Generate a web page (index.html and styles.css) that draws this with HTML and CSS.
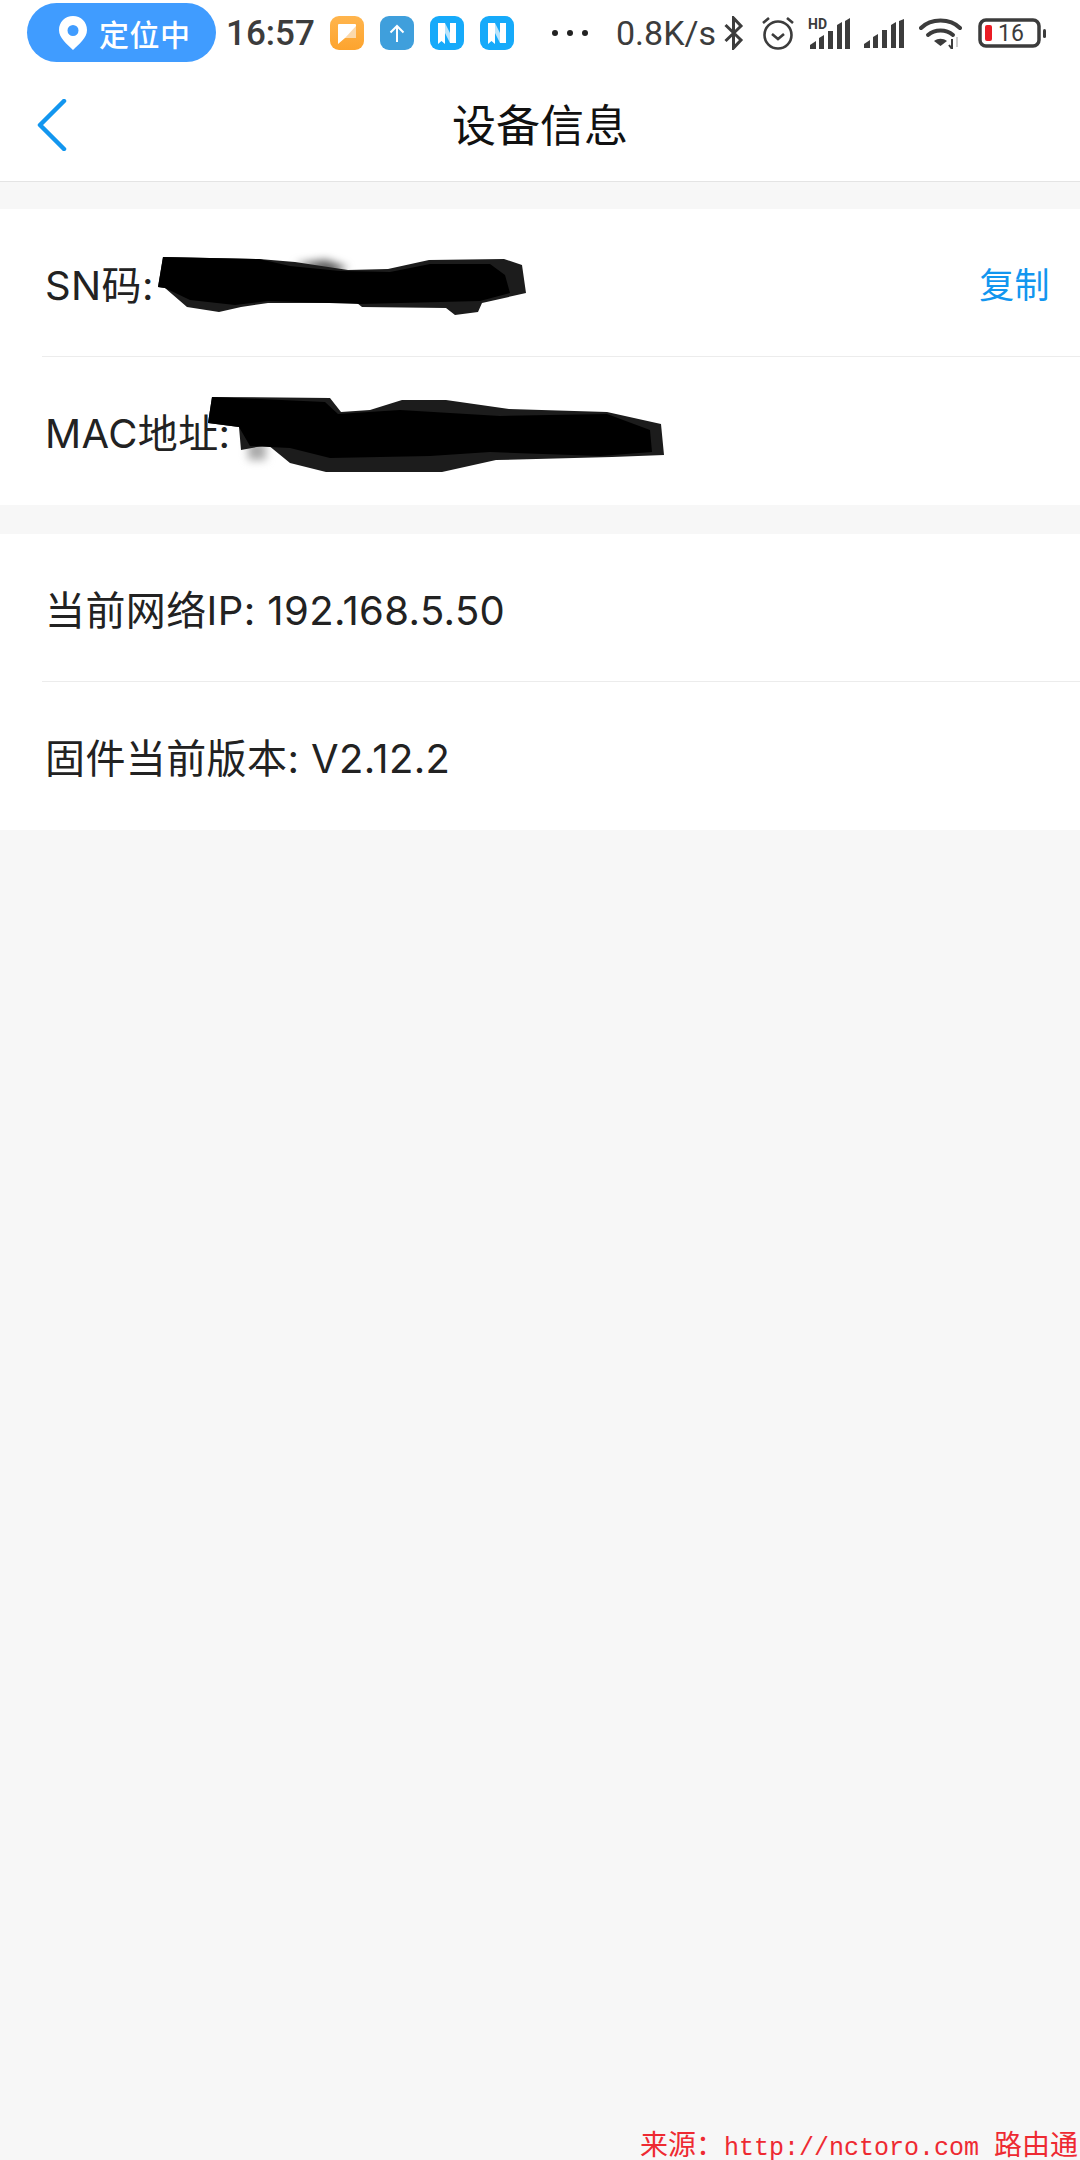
FILE: index.html
```html
<!DOCTYPE html>
<html lang="zh-CN">
<head>
	<meta charset="UTF-8">
	<title>设备信息</title>
	<link rel="stylesheet" href="styles.css">
</head>
<body>
	<div class="page">
		<div class="status">
			<div class="pill">
				<svg class="pin" viewBox="0 0 28 34"><path fill="#fff" fill-rule="evenodd" d="M14 0C6 0 0 6 0 14c0 8 8 14 14 20 6-6 14-12 14-20C28 6 22 0 14 0zm0 9a5.500 5.500 0 1 1 0 11 5.500 5.500 0 0 1 0-11z"/></svg>
				<span>定位中</span>
			</div>
			<span class="time">16:57</span>
			<div class="apps">
				<svg class="app" viewBox="0 0 34 34"><defs><linearGradient id="og" x1="0" y1="0" x2="0" y2="1"><stop offset="0" stop-color="#ffb54d"/><stop offset="1" stop-color="#fda42e"/></linearGradient></defs><rect width="34" height="34" rx="9" fill="url(#og)"/><path fill="#fff" d="M9 8h16a1 1 0 0 1 1 1v13H15l-7 6V9a1 1 0 0 1 1-1z"/><path fill="#fbd9ac" d="M26 10v12H15z"/></svg>
				<svg class="app" viewBox="0 0 34 34"><rect width="34" height="34" rx="9" fill="#3f9fdc"/><path fill="none" stroke="#fff" stroke-width="2" d="M17 26V10M10.500 16.500 17 10l6.500 6.500"/></svg>
				<svg class="app" viewBox="0 0 34 34"><rect width="34" height="34" rx="9" fill="#16aafa"/><path fill="#fff" d="M8 7h7v21l-3.500-3L8 28z"/><path fill="#fff" d="M20 7h6v20h-6z"/><path fill="#b9e4fb" d="M15 7l5 10v10l-5-10z"/></svg>
				<svg class="app" viewBox="0 0 34 34"><rect width="34" height="34" rx="9" fill="#16aafa"/><path fill="#fff" d="M8 7h7v21l-3.500-3L8 28z"/><path fill="#fff" d="M20 7h6v20h-6z"/><path fill="#b9e4fb" d="M15 7l5 10v10l-5-10z"/></svg>
			</div>
			<div class="dots"><i></i><i></i><i></i></div>
			<span class="speed">0.8K/s</span>
			<svg class="bt" viewBox="0 0 20 34"><path fill="none" stroke="#3c3c3c" stroke-width="3" d="M1.500 9 17 24 9.500 32V2L17 10 1.500 25"/></svg>
			<svg class="alarm" viewBox="0 0 34 34"><g fill="none" stroke="#3c3c3c" stroke-width="2.600"><circle cx="17" cy="19" r="13.500"/><path d="M11 18l6 5 6-5M2 7l6-5M32 7l-6-5"/></g></svg>
			<svg class="hd" viewBox="0 0 42 31"><text x="0" y="11" class="hd-text">HD</text><path fill="#3c3c3c" d="M2 31v-4l6-4v8zM11 31V20l5-3v14zM20 31V13h5v18zM29 31V7l5-3v27zM37 31V3l5-3v31z"/></svg>
			<svg class="signal" viewBox="0 0 40 29"><path fill="#3c3c3c" d="M0 29v-4l6-4v8zM9 29V18l5-3v14zM18 29V11h5v18zM27 29V6l5-3v26zM35 29V2l5-2v29z"/></svg>
			<svg class="wifi" viewBox="0 0 43 32"><g fill="none" stroke="#3c3c3c" stroke-width="4" stroke-linecap="round"><path d="M2 11C12 1 31 1 41 11"/><path d="M9 18c7-6 18-6 25 0"/></g><path fill="#3c3c3c" d="M15 24c4-3 9-3 13 0l-6.500 5z"/><path fill="none" stroke="#3c3c3c" stroke-width="2" d="M33 22v10M30 28l3 4"/><path fill="none" stroke="#ccc" stroke-width="2" d="M38 20v10"/></svg>
			<svg class="battery" viewBox="0 0 68 30"><rect x="2" y="2" width="59" height="26" rx="6" fill="none" stroke="#3c3c3c" stroke-width="3.500"/><rect x="7" y="7" width="7" height="16" rx="2" fill="#ea1c24"/><text x="20" y="23" class="batt-text">16</text><rect x="65" y="11" width="3" height="9" rx="1.500" fill="#3c3c3c"/></svg>
		</div>

		<div class="nav">
			<svg class="back" viewBox="0 0 30 52"><path fill="none" stroke="#1296ef" stroke-width="4.500" stroke-linecap="round" stroke-linejoin="round" d="M27 2 3 26l24 24"/></svg>
			<h1>设备信息</h1>
		</div>

		<div class="card">
			<div class="row">
				<span>SN码:</span>
				<a class="copy">复制</a>
				<svg class="scrawl" viewBox="0 209 1080 148"><path class="smudge" fill="#555" d="M295 264 326 260 348 268 330 275z"/><path fill="#1c1c1c" d="M163 257 259 259 295 262 348 270 388 269 429 260 504 259 522 265 526 293 482 303 478 312 455 315 446 308 362 307 357 303 268 303 241 307 219 312 187 307 165 288 158 287z"/><path d="M163 257 259 259 290 266 340 271 390 272 430 264 490 264 505 275 510 293 480 301 360 304 268 301 235 305 190 300 165 288 158 287z"/></svg>
			</div>
			<div class="row">
				<span>MAC地址:</span>
				<svg class="scrawl" viewBox="0 357 1080 148"><path class="smudge" fill="#aaa" d="M248 442H266V460H248z"/><path fill="#1c1c1c" d="M212 397 330 398 341 412 370 410 402 400 446 400 509 409 607 412 661 424 664 455 612 457 496 460 442 472 326 472 290 463 268 445 241 450 239 427 208 423z"/><path d="M212 397 325 402 338 414 400 410 500 416 607 414 650 430 652 452 600 456 490 452 430 456 330 458 290 448 250 446 239 427 208 423z"/></svg>
			</div>
		</div>

		<div class="card card-net">
			<div class="row"><span>当前网络IP: 192.168.5.50</span></div>
			<div class="row"><span>固件当前版本: V2.12.2</span></div>
		</div>

		<div class="mark">来源：<span class="mark-url">http://nctoro.com </span>路由通</div>
	</div>
</body>
</html>
```

FILE: styles.css
```css
*{box-sizing: border-box;}
html,body{margin: 0;padding: 0;}
body{width: 1080px;font-family: Inter,"Noto Sans CJK SC",sans-serif;background: #f7f7f7;}
.page{position: relative;height: 2160px;display: flex;flex-direction: column;}

/* status bar */
.status{height: 66px;background: #fff;display: flex;align-items: center;padding-left: 27px;color: #3c3c3c;white-space: nowrap;}
.status svg{display: block;flex: none;}
.pill{width: 189px;height: 59px;align-self: flex-start;margin-top: 3px;background: #409cff;border-radius: 30px;display: flex;align-items: center;padding-left: 32px;color: #fff;font-size: 30px;font-weight: 500;}
.pill span{margin-left: 12px;letter-spacing: .5px;}
.pin{width: 28px;height: 34px;}
.time{margin-left: 10px;width: 104px;font: 500 35px Roboto,sans-serif;}
.apps{display: flex;gap: 16px;}
.app{width: 34px;height: 34px;}
.dots{display: flex;gap: 9px;margin-left: 38px;}
.dots i{width: 6px;height: 6px;border-radius: 50%;background: #222;}
.speed{margin-left: 28px;width: 108px;font: 400 34px Roboto,sans-serif;}
.bt{width: 20px;height: 34px;}
.alarm{width: 34px;height: 34px;margin-left: 17px;}
.hd{width: 42px;height: 31px;margin-left: 13px;}
.hd-text{font: 700 14px Roboto,sans-serif;fill: #3c3c3c;}
.signal{width: 40px;height: 29px;margin-left: 14px;}
.wifi{width: 43px;height: 32px;margin-left: 15px;}
.battery{width: 68px;height: 30px;margin-left: 16px;}
.batt-text{font: 400 23px Roboto,sans-serif;fill: #3c3c3c;}

/* title bar */
.nav{height: 116px;padding-bottom: 2px;background: #fff;border-bottom: 1px solid #e4e4e4;display: flex;align-items: center;justify-content: center;position: relative;}
.nav h1{margin: 0;font-size: 44px;font-weight: 400;color: #111;}
.back{position: absolute;left: 37px;top: 33px;width: 30px;height: 52px;}

/* cards */
.card{margin-top: 27px;background: #fff;}
.card-net{margin-top: 29px;}
.row{position: relative;height: 148px;margin-left: 42px;padding-left: 3px;padding-right: 30px;border-bottom: 1px solid #ececec;display: flex;align-items: center;justify-content: space-between;font-size: 40px;font-weight: 400;color: #222;letter-spacing: .4px;}
.row:last-child{border-bottom: 0;}
.copy{font-size: 35px;color: #1296ef;}
.scrawl{position: absolute;left: -42px;top: 0;width: 1080px;height: 148px;}
.smudge{filter: blur(4px);}

/* watermark */
.mark{position: absolute;right: 2px;bottom: -3px;font: 28px "Noto Sans CJK SC",serif;color: #ee2a32;white-space: pre;}
.mark-url{font: 25px "Liberation Mono",monospace;}
```
